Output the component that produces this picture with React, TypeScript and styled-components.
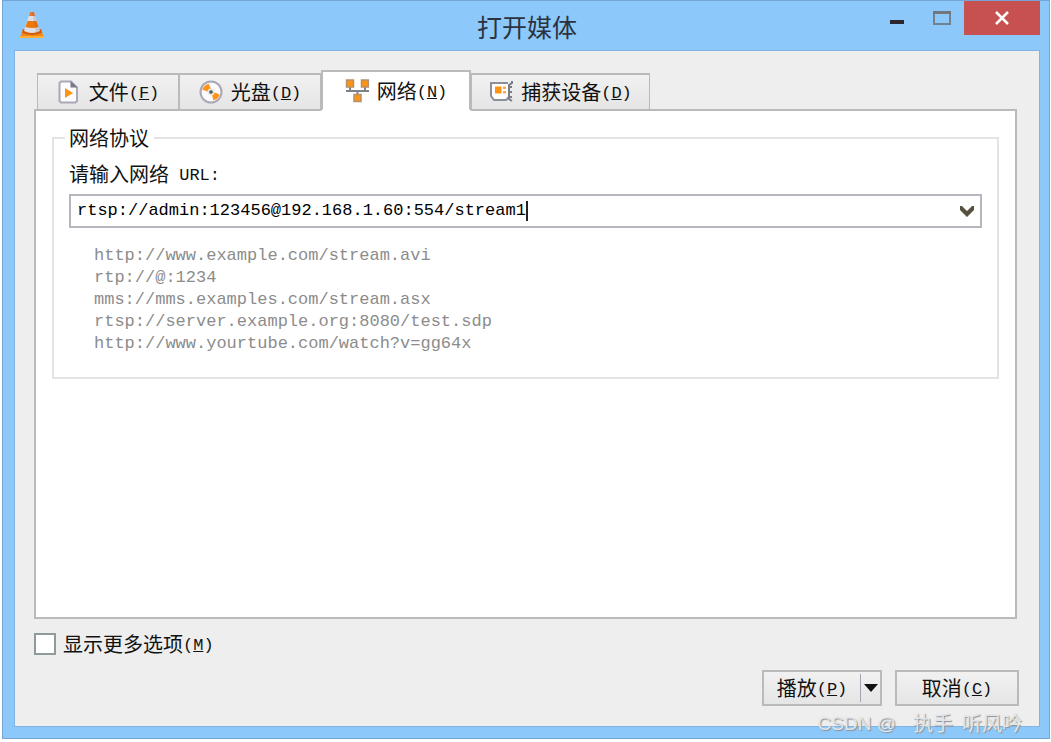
import React from "react";
import styled, { createGlobalStyle } from "styled-components";

const GlobalStyle = createGlobalStyle`
  *, *::before, *::after { box-sizing: border-box; }
  body {
    margin: 0;
    background: #fff;
    color: #111;
    font: 20px/22px "Noto Sans CJK SC", "Liberation Mono", sans-serif;
  }
  button, input { font: inherit; color: inherit; margin: 0; }
`;

const Window = styled.div`
  position: relative;
  display: flex;
  flex-direction: column;
  min-height: calc(100vh - 3px);
  margin: 0 1px 3px 2px;
  padding: 0 9px 11px 11px;
  border: 1px solid #74a5d3;
  background: #8dc8fb;
`;

const TitleBar = styled.header`
  display: grid;
  grid-template-columns: 1fr auto 1fr;
  align-items: start;
  height: 49px;
`;

const AppIcon = styled.svg`
  width: 26px;
  height: 28px;
  margin: 10px 0 0 5px;
`;

const Title = styled.h1`
  margin: 10px 0 0;
  font-size: 25px;
  font-weight: 400;
  line-height: 30px;
  color: #2b3340;
`;

const WindowControls = styled.div`
  display: flex;
  justify-content: flex-end;
`;

const ControlButton = styled.button<{ $danger?: boolean }>`
  display: flex;
  width: ${(p) => (p.$danger ? 76 : 45)}px;
  height: 34px;
  padding: 0;
  border: 0;
  align-items: center;
  justify-content: center;
  background: ${(p) => (p.$danger ? "#c75050" : "transparent")};
`;

const Body = styled.main`
  display: flex;
  flex: 1;
  flex-direction: column;
  padding: 19px 22px 20px 19px;
  border: 1px solid #7fb4e3;
  background: #eee;
`;

const TabList = styled.div`
  display: flex;
  align-items: flex-end;
  margin: 0 0 -2px 3px;
`;

const Tab = styled.button<{ $active?: boolean; $width: number }>`
  display: flex;
  z-index: ${(p) => (p.$active ? 1 : 0)};
  align-items: center;
  justify-content: center;
  gap: 8px;
  width: ${(p) => p.$width}px;
  height: ${(p) => (p.$active ? 41 : 38)}px;
  padding: 0;
  border: 2px solid #bababa;
  border-right-width: ${(p) => (p.$active ? 2 : 1)}px;
  border-left-width: ${(p) => (p.$active ? 2 : 1)}px;
  border-bottom-color: ${(p) => (p.$active ? "#fff" : "#bababa")};
  background: ${(p) => (p.$active ? "#fff" : "linear-gradient(#f1f1f1, #e5e5e5)")};
  white-space: nowrap;
`;

const TabIcon = styled.svg`
  flex: none;
  width: 24px;
  height: 24px;
`;

const Mnemonic = styled.span`
  font-family: "Liberation Mono", monospace;
  font-size: 17px;
  line-height: 1;
  vertical-align: 2px;
  white-space: pre;
`;

const Panel = styled.section`
  flex: 1;
  padding: 16px;
  border: 2px solid #bababa;
  background: #fff;
`;

const Group = styled.fieldset`
  min-width: 0;
  margin: 0;
  padding: 14px 15px 22px;
  border: 2px solid #e4e4e4;
`;

const Legend = styled.legend`
  margin-left: -4px;
  padding: 0 5px 0 4px;
`;

const FieldLabel = styled.label`
  display: block;
  height: 22px;
  margin-bottom: 9px;
`;

const ComboBox = styled.div`
  display: flex;
  align-items: center;
  height: 34px;
  padding-left: 6px;
  border: 2px solid #b6b6be;
  background: #fff;
`;

const UrlInput = styled.input`
  field-sizing: content;
  min-width: 10px;
  padding: 0;
  border: 0;
  outline: 0;
  background: transparent;
  font-family: "Liberation Mono", monospace;
  font-size: 17px;
  color: #000;
  caret-color: transparent;
`;

const Caret = styled.span`
  width: 2px;
  height: 20px;
  background: #222;
`;

const DropButton = styled.button`
  display: flex;
  width: 26px;
  height: 30px;
  margin-left: auto;
  padding: 0;
  border: 0;
  align-items: center;
  justify-content: center;
  background: transparent;
`;

const Hints = styled.ul`
  margin: 17px 0 0;
  padding: 0 0 0 25px;
  list-style: none;
  font-family: "Liberation Mono", monospace;
  font-size: 17px;
  color: #8c8c8c;
`;

const OptionRow = styled.label`
  display: flex;
  align-items: center;
  align-self: flex-start;
  gap: 7px;
  margin-top: 14px;
`;

const CheckBox = styled.input`
  appearance: none;
  width: 22px;
  height: 22px;
  border: 2px solid #8f9a9b;
  background: #fff;
`;

const Actions = styled.div`
  display: flex;
  justify-content: flex-end;
  gap: 13px;
  margin: 15px -2px 0 0;
`;

const SplitButton = styled.div`
  display: flex;
  align-items: center;
  width: 120px;
  height: 36px;
  border: 2px solid #bababa;
  background: linear-gradient(#f1f1f1, #e5e5e5);
`;

const SplitPart = styled.button<{ $menu?: boolean }>`
  display: flex;
  flex: ${(p) => (p.$menu ? "none" : 1)};
  width: ${(p) => (p.$menu ? "20px" : "auto")};
  height: 28px;
  padding: 0;
  border: 0;
  border-left: ${(p) => (p.$menu ? "1px solid #a4a4ae" : "0")};
  align-items: center;
  justify-content: center;
  background: transparent;
  white-space: nowrap;
`;

const PushButton = styled.button`
  width: 124px;
  height: 36px;
  padding: 0;
  border: 2px solid #bababa;
  background: linear-gradient(#f1f1f1, #e5e5e5);
`;

const Watermark = styled.div`
  position: absolute;
  right: 27px;
  bottom: 3px;
  display: flex;
  gap: 9px;
  color: #e2e5e8;
  font-family: "Liberation Sans", "Noto Sans CJK SC", sans-serif;
  text-shadow: 1px 1px 1px #8b8f94;
  pointer-events: none;
`;

const Handle = styled.span`
  margin-right: 8px;
  font-size: 19px;
`;

const Key = ({ letter }: { letter: string }) => (
  <Mnemonic>
    (<u>{letter}</u>)
  </Mnemonic>
);

const Cone = () => (
  <AppIcon viewBox="0 0 26 28" aria-hidden="true">
    <path d="M4 18h18l3 9H1z" fill="#f58a13" />
    <path d="M1 25h24v2H1z" fill="#ffad35" />
    <path d="M4 18h18l1 4q-10 4-20 0z" fill="#d55d0c" />
    <path d="M11 1h4l6 19q-8 4-16 0z" fill="#dfdfe8" />
    <path d="M11 1h4l1 4h-6z" fill="#e8782c" />
    <path d="M8.500 10h9l2 6q-6 2-13 0z" fill="#f07709" />
    <path d="M15 1l6 19-4 2-4-21z" fill="#604050" opacity=".15" />
  </AppIcon>
);

const FileIcon = () => (
  <TabIcon viewBox="0 0 24 24" aria-hidden="true">
    <path d="M4 1.500h10l6 6V21l-1.500 1.500H4L2.500 21V3z" fill="#fcfcff" stroke="#aaa8b8" strokeWidth="2" />
    <path d="M13.500 1v6.500H20.500z" fill="#777987" />
    <path d="M8 8l8 5-8 5z" fill="#ff9412" />
  </TabIcon>
);

const DiscIcon = () => (
  <TabIcon viewBox="0 0 24 24" aria-hidden="true">
    <circle cx="12" cy="12" r="10.500" fill="#fbfbfd" stroke="#a9a8b4" strokeWidth="2" />
    <path d="M10 11L4.500 9Q6 6 9 5l2 4z" fill="#ff941a" stroke="#ff941a" strokeWidth="2" />
    <path d="M14 13l5.500 2q-1 3-4.500 4l-1-4z" fill="#ff941a" stroke="#ff941a" strokeWidth="2" />
    <circle cx="12" cy="12" r="3.500" fill="#e7e6e1" />
    <circle cx="12" cy="12" r="1.800" fill="#485966" />
  </TabIcon>
);

const NetworkIcon = () => (
  <TabIcon viewBox="0 0 24 24" aria-hidden="true">
    <path d="M1 12h23M5 8v4M20 8v4M12.500 12v4" stroke="#7c828c" strokeWidth="2" />
    <path d="M1.500 1h7v7h-7zM16.500 1h7v7h-7zM9 15.500h7v7H9z" fill="#ff9412" stroke="#b5906c" strokeWidth="1.500" />
  </TabIcon>
);

const CaptureIcon = () => (
  <TabIcon viewBox="0 0 24 24" aria-hidden="true">
    <path d="M19 3H2v13l3 4h12l3-3" fill="#fff" stroke="#8a8f99" strokeWidth="2" />
    <path d="M23 1v2l-3 2v14l3 2M20 7h3M20 12h3M20 17h3" fill="none" stroke="#777d87" strokeWidth="2" />
    <path d="M6 6.500h6.500v7H6z" fill="#ff9412" />
    <path d="M14 6.500h3V9h-3zM14 11h3v2.500h-3z" fill="#ffab4d" />
  </TabIcon>
);

const tabs = [
  { label: "文件", letter: "F", icon: <FileIcon />, width: 142 },
  { label: "光盘", letter: "D", icon: <DiscIcon />, width: 142 },
  { label: "网络", letter: "N", icon: <NetworkIcon />, width: 150, active: true },
  { label: "捕获设备", letter: "D", icon: <CaptureIcon />, width: 179 },
];

const examples = [
  "http://www.example.com/stream.avi",
  "rtp://@:1234",
  "mms://mms.examples.com/stream.asx",
  "rtsp://server.example.org:8080/test.sdp",
  "http://www.yourtube.com/watch?v=gg64x",
];

export default function App() {
  return (
    <>
      <GlobalStyle />
      <Window>
        <TitleBar>
          <Cone />
          <Title>打开媒体</Title>
          <WindowControls>
            <ControlButton aria-label="最小化">
              <svg width="14" height="12">
                <path d="M0 8h14v4H0z" fill="#2b2730" />
              </svg>
            </ControlButton>
            <ControlButton aria-label="最大化">
              <svg width="18" height="14">
                <path d="M1 1h16v12H1z" fill="none" stroke="#71828e" strokeWidth="2" />
                <path d="M0 0h18v3H0z" fill="#71777a" />
              </svg>
            </ControlButton>
            <ControlButton $danger aria-label="关闭">
              <svg width="16" height="14">
                <path d="M2 1l12 12M14 1L2 13" stroke="#fff" strokeWidth="2.500" />
              </svg>
            </ControlButton>
          </WindowControls>
        </TitleBar>
        <Body>
          <TabList role="tablist">
            {tabs.map((t) => (
              <Tab key={t.label} role="tab" aria-selected={!!t.active} $active={t.active} $width={t.width}>
                {t.icon}
                <span>
                  {t.label}
                  <Key letter={t.letter} />
                </span>
              </Tab>
            ))}
          </TabList>
          <Panel role="tabpanel">
            <Group>
              <Legend>网络协议</Legend>
              <FieldLabel htmlFor="url">
                请输入网络<Mnemonic> URL:</Mnemonic>
              </FieldLabel>
              <ComboBox>
                <UrlInput id="url" type="text" size={44} defaultValue="rtsp://admin:123456@192.168.1.60:554/stream1" />
                <Caret />
                <DropButton aria-label="历史记录">
                  <svg width="14" height="12">
                    <path d="M0 1h2l5 5 5-5h2v4l-7 7-7-7z" fill="#56523f" />
                  </svg>
                </DropButton>
              </ComboBox>
              <Hints>
                {examples.map((e) => (
                  <li key={e}>{e}</li>
                ))}
              </Hints>
            </Group>
          </Panel>
          <OptionRow>
            <CheckBox type="checkbox" />
            <span>
              显示更多选项
              <Key letter="M" />
            </span>
          </OptionRow>
          <Actions>
            <SplitButton>
              <SplitPart>
                <span>
                  播放
                  <Key letter="P" />
                </span>
              </SplitPart>
              <SplitPart $menu aria-label="更多播放方式">
                <svg width="14" height="8">
                  <path d="M0 0h14L7 8z" fill="#111" />
                </svg>
              </SplitPart>
            </SplitButton>
            <PushButton>
              取消
              <Key letter="C" />
            </PushButton>
          </Actions>
        </Body>
        <Watermark>
          <Handle>CSDN @</Handle>
          <span>执手</span>
          <span>听风吟</span>
        </Watermark>
      </Window>
    </>
  );
}
